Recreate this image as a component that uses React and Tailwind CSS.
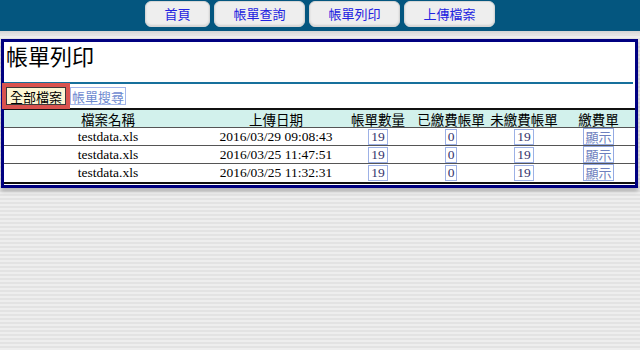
import React from 'react';

const navItems = [
  { label: '首頁', width: 'w-[65px]' },
  { label: '帳單查詢', width: 'w-[91px]' },
  { label: '帳單列印', width: 'w-[91px]' },
  { label: '上傳檔案', width: 'w-[91px]' },
];

const bills = [
  { name: 'testdata.xls', date: '2016/03/29 09:08:43', total: 19, paid: 0, unpaid: 19 },
  { name: 'testdata.xls', date: '2016/03/25 11:47:51', total: 19, paid: 0, unpaid: 19 },
  { name: 'testdata.xls', date: '2016/03/25 11:32:31', total: 19, paid: 0, unpaid: 19 },
];

const cjk = "font-['Noto_Sans_CJK_TC',sans-serif]";
const serif = "font-['Liberation_Serif','Noto_Sans_CJK_TC',serif]";
const grid = 'grid grid-cols-[208px_128px_76px_70px_76px_1fr]';

const NumBox = ({ value }) => (
  <span className={`inline-block border border-[#9db1e6] bg-white px-[2px] text-[13.5px] leading-[14px] text-[#34346e] ${serif}`}>
    {value}
  </span>
);

const App = () => {
  return (
    <div className="min-h-[350px] w-[640px] bg-[repeating-linear-gradient(to_bottom,#eeeeee_0px,#eeeeee_2px,#e3e3e3_2px,#e3e3e3_4px)]">
      {/* top nav */}
      <div className="flex h-[31px] justify-center gap-[4px] bg-[#04567f] pt-[1px]">
        {navItems.map((item) => (
          <div
            key={item.label}
            className={`${item.width} flex h-[26px] items-center justify-center rounded-[6px] border border-[#d6d6d6] bg-[#eeeeee] pb-[2px] shadow-[inset_0_-1px_2px_rgba(0,0,0,0.12)] text-[13px] leading-[15px] text-[#2222e0] ${cjk}`}
          >
            {item.label}
          </div>
        ))}
      </div>
      <div className="h-[4px] bg-gradient-to-b from-[#d4d4d4] to-[#e6e6e6]" />
      <div className="h-[4px]" />

      {/* card */}
      <div className="ml-[1px] mr-[2px] border-[3px] border-[#000080] bg-white shadow-[0_3px_4px_rgba(0,0,0,0.25)]">
        <h1 className={`h-[40px] pl-[2px] text-[22px] leading-[27px] text-black ${cjk}`}>帳單列印</h1>
        <div className="mr-[2px] h-[2px] bg-[#16709c]" />

        <div className="flex h-[24px] items-start gap-[4px] pl-[2px] pt-[3px]">
          <button className={`h-[18px] border border-[#3a3a3a] bg-[#fdf6d4] px-[3px] text-[13px] leading-[15px] text-black outline-4 outline-[#d9534f] ${cjk}`}>
            全部檔案
          </button>
          <button className={`h-[18px] border border-[#a3b6ea] bg-white px-[1px] text-[13px] leading-[15px] text-[#6e8ad0] ${cjk}`}>
            帳單搜尋
          </button>
        </div>

        {/* table */}
        <div className="border-t-2 border-b-2 border-[#111111]">
          <div className={`${grid} h-[18px] items-center border-b border-[#555555] bg-[#d2f1ec] text-center text-[13.5px] leading-[16px] text-black ${cjk}`}>
            <div>檔案名稱</div>
            <div>上傳日期</div>
            <div>帳單數量</div>
            <div>已繳費帳單</div>
            <div>未繳費帳單</div>
            <div>繳費單</div>
          </div>
          {bills.map((bill, i) => (
            <div
              key={bill.date}
              className={`${grid} h-[18px] items-center text-center text-[13.5px] leading-[16px] text-black ${serif} ${
                i < bills.length - 1 ? 'border-b border-[#555555]' : 'h-[17px]'
              }`}
            >
              <div>{bill.name}</div>
              <div>{bill.date}</div>
              <div>
                <NumBox value={bill.total} />
              </div>
              <div>
                <NumBox value={bill.paid} />
              </div>
              <div>
                <NumBox value={bill.unpaid} />
              </div>
              <div>
                <span className={`inline-block border border-[#94a9e2] bg-white px-[1px] text-[13px] leading-[15px] text-[#6d7fbe] ${cjk}`}>
                  顯示
                </span>
              </div>
            </div>
          ))}
        </div>
        <div className="h-[1px]" />
      </div>
    </div>
  );
};

export default App;
